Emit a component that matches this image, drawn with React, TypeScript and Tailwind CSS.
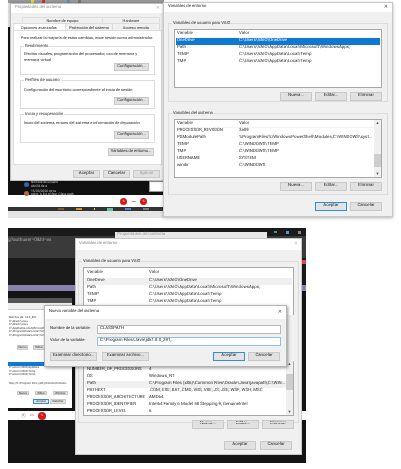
const font = "font-['Roboto',sans-serif] [text-rendering:geometricPrecision]";

function Btn({ children, className = "", primary = false, disabled = false }: { children: React.ReactNode; className?: string; primary?: boolean; disabled?: boolean }) {
  return (
    <div className={`flex items-center justify-center whitespace-nowrap text-[4.4px] leading-none border ${primary ? "border-[#2b8fd9] bg-[#e3e3e3] border-[1.5px]" : "border-[#c9c9c9] bg-[#e1e1e1]"} ${disabled ? "text-[#9a9a9a] bg-[#cfcfcf]" : "text-[#222]"} ${className}`}>
      {children}
    </div>
  );
}

function GroupBox({ label, className = "", labelBg = "bg-[#f0f0f0]", children }: { label: string; className?: string; labelBg?: string; children: React.ReactNode }) {
  return (
    <div className={`relative border border-[#dcdcdc] ${className}`}>
      <span className={`absolute left-[3px] top-[-4px] px-[1px] text-[4.2px] leading-[7px] whitespace-nowrap text-[#2a2a2a] ${labelBg}`}>{label}</span>
      {children}
    </div>
  );
}

function Row({ name, value, selected = false, hover = false }: { name: string; value: string; selected?: boolean; hover?: boolean }) {
  return (
    <div className={`flex h-[7px] items-center text-[4.4px] leading-none whitespace-nowrap ${selected ? "bg-[#0f78d0] text-white" : hover ? "bg-[#f0f0f0] text-[#2a2a2a]" : "text-[#2a2a2a]"}`}>
      <span className="w-[63px] shrink-0 pl-[1px]">{name}</span>
      <span>{value}</span>
    </div>
  );
}

function List({ className = "", rows, scroll = false, thumbClass = "" }: { className?: string; rows: { n: string; v: string; s?: boolean; h?: boolean }[]; scroll?: boolean; thumbClass?: string }) {
  return (
    <div className={`relative overflow-hidden border border-[#a8a8a8] bg-white px-[1px] pt-[1px] ${className}`}>
      <div className="flex h-[7px] items-center border-b border-[#f4f4f4] text-[4.4px] leading-none text-[#333]">
        <span className="w-[63px] shrink-0 pl-[1px]">Variable</span>
        <span>Valor</span>
      </div>
      <div className="flex flex-col">
        {rows.map((r) => (
          <Row key={r.n} name={r.n} value={r.v} selected={r.s} hover={r.h} />
        ))}
      </div>
      {scroll && (
        <div className="absolute right-0 top-0 flex h-full w-[7px] flex-col items-center bg-[#f0f0f0] text-[4px] leading-[6px] text-[#555]">
          <span>▲</span>
          <div className={`w-full bg-[#cdcdcd] ${thumbClass}`} />
          <span className="mt-auto">▼</span>
        </div>
      )}
    </div>
  );
}

function Triple() {
  return (
    <div className="flex justify-end gap-[3px]">
      <Btn className="h-[9px] w-[32px]">Nueva...</Btn>
      <Btn className="h-[9px] w-[32px]">Editar...</Btn>
      <Btn className="h-[9px] w-[32px]">Eliminar</Btn>
    </div>
  );
}

function TitleBar({ title, muted = false, className = "" }: { title: string; muted?: boolean; className?: string }) {
  return (
    <div className={`flex h-[9px] items-center justify-between bg-white text-[4.2px] leading-none ${muted ? "text-[#8a8a8a]" : "text-[#2a2a2a]"} ${className}`}>
      <span>{title}</span>
      <span className={`text-[5px] ${muted ? "text-[#bbb]" : "text-[#555]"}`}>✕</span>
    </div>
  );
}

function PerfBox({ label, text }: { label: string; text: React.ReactNode }) {
  return (
    <GroupBox label={label} labelBg="bg-white" className="flex h-[29px] flex-col bg-white px-[3px] pt-[4px]">
      <p className="text-[3.9px] leading-[6px] whitespace-nowrap text-[#2a2a2a]">{text}</p>
      <Btn className="mt-auto mb-[3px] ml-auto mr-[2px] h-[8px] w-[35px] !text-[4.1px]">Configuración...</Btn>
    </GroupBox>
  );
}

function DialogSistema() {
  return (
    <div className="absolute left-[10px] top-[3px] flex h-[178px] w-[155px] flex-col border border-[#bdbdbd] bg-[#f0f0f0] shadow-[0_0_3px_rgba(0,0,0,0.25)]">
      <TitleBar title="Propiedades del sistema" muted className="px-[4px]" />
      <div className="flex flex-1 flex-col bg-[#f0f0f0] px-[2px] pt-[4px]">
        <div className="flex h-[6px] text-[3.9px] leading-[6px] text-[#2a2a2a]">
          <span className="ml-[9px] w-[81px] border-x border-t border-[#ddd] text-center">Nombre de equipo</span>
          <span className="w-[57px] border-r border-t border-[#ddd] text-center">Hardware</span>
        </div>
        <div className="flex h-[7px] text-[3.9px] leading-[7px] text-[#2a2a2a]">
          <span className="w-[53px] border-x border-t border-[#ddd] bg-white pl-[7px] whitespace-nowrap">Opciones avanzadas</span>
          <span className="w-[47px] border-r border-t border-[#ddd] text-center whitespace-nowrap">Protección del sistema</span>
          <span className="w-[47px] border-r border-t border-[#ddd] text-center whitespace-nowrap">Acceso remoto</span>
        </div>
        <div className="flex h-[135px] w-[149px] flex-col border border-[#dcdcdc] bg-white px-[6px] pt-[4px]">
          <p className="ml-[1px] text-[3.9px] leading-[6px] whitespace-nowrap text-[#2a2a2a]">Para realizar la mayoría de estos cambios, inicie sesión como administrador.</p>
          <div className="mt-[5px] flex flex-col gap-[5px]">
            <PerfBox label="Rendimiento" text={<>Efectos visuales, programación del procesador, uso de memoria y<br />memoria virtual</>} />
            <PerfBox label="Perfiles de usuario" text={<span className="mt-[2px] block">Configuración del escritorio correspondiente al inicio de sesión</span>} />
            <PerfBox label="Inicio y recuperación" text={<span className="mt-[1px] block">Inicio del sistema, errores del sistema e información de depuración</span>} />
          </div>
          <Btn className="mt-[5px] ml-auto mr-[1px] h-[8px] w-[46px] !text-[4.1px]">Variables de entorno...</Btn>
        </div>
        <div className="mt-[5px] flex justify-end gap-[3px] pr-[2px]">
          <Btn className="h-[8px] w-[27px]">Aceptar</Btn>
          <Btn className="h-[8px] w-[27px]">Cancelar</Btn>
          <Btn disabled className="h-[8px] w-[27px]">Aplicar</Btn>
        </div>
      </div>
    </div>
  );
}

function DialogEntornoTop() {
  const user = [
    { n: "OneDrive", v: "C:\\Users\\VAIO\\OneDrive", s: true },
    { n: "Path", v: "C:\\Users\\VAIO\\AppData\\Local\\Microsoft\\WindowsApps;" },
    { n: "TEMP", v: "C:\\Users\\VAIO\\AppData\\Local\\Temp" },
    { n: "TMP", v: "C:\\Users\\VAIO\\AppData\\Local\\Temp" },
  ];
  const sys = [
    { n: "PROCESSOR_REVISION", v: "3a09" },
    { n: "PSModulePath", v: "%ProgramFiles%\\WindowsPowerShell\\Modules;C:\\WINDOWS\\syst..." },
    { n: "TEMP", v: "C:\\WINDOWS\\TEMP" },
    { n: "TMP", v: "C:\\WINDOWS\\TEMP" },
    { n: "USERNAME", v: "SYSTEM" },
    { n: "windir", v: "C:\\WINDOWS" },
  ];
  return (
    <div className="absolute left-[163px] top-[2px] flex h-[215px] w-[230px] flex-col border border-[#c8c8c8] bg-[#f0f0f0] shadow-[0_1px_3px_rgba(0,0,0,0.3)]">
      <TitleBar title="Variables de entorno" className="px-[4px]" />
      <div className="flex flex-1 flex-col px-[4px] pt-[11px]">
        <GroupBox label="Variables de usuario para VAIO" className="flex h-[79px] flex-col px-[5px] pt-[5px]">
          <List className="h-[59px]" rows={user} />
          <div className="mt-[4px]"><Triple /></div>
        </GroupBox>
        <GroupBox label="Variables del sistema" className="mt-[11px] flex h-[82px] flex-col px-[5px] pt-[5px]">
          <List className="h-[59px]" scroll thumbClass="mt-[28px] h-[13px]" rows={sys} />
          <div className="mt-[4px]"><Triple /></div>
        </GroupBox>
        <div className="mt-[7px] flex justify-end gap-[3px] pr-[6px]">
          <Btn primary className="h-[9px] w-[32px]">Aceptar</Btn>
          <Btn className="h-[9px] w-[32px]">Cancelar</Btn>
        </div>
      </div>
    </div>
  );
}

function TopScene() {
  return (
    <div className="absolute left-[8px] top-0 flex h-[221px] w-[156px] flex-col">
      <div className="flex h-[3px] items-center gap-[8px] bg-[#9a9a9a] pl-[23px]">
        <span className="h-[3px] w-[3px] bg-[#e5d23a]" />
        <span className="h-[3px] w-[3px] bg-[#c33]" />
        <span className="ml-[14px] h-[3px] w-[3px] bg-[#6a8fc0]" />
        <span className="h-[3px] w-[3px] bg-[#777]" />
      </div>
      <div className="h-[24px] bg-[#e8e8e8]" />
      <div className="h-[168px] bg-[#111]" />
      <div className="flex h-[12px] items-center justify-end gap-[4.5px] bg-white pr-[17px]">
        <span className="flex h-[7px] w-[7px] items-center justify-center rounded-full bg-[#d9181b] text-[3px] text-white">%</span>
        <span className="h-[1px] w-[4px] bg-[#e08a8a]" />
        <span className="flex h-[7px] w-[7px] items-center justify-center rounded-full bg-[#d9181b] text-[3px] text-white">%</span>
      </div>
      <div className="flex h-[4px] items-center gap-[12px] bg-[#333] pl-[50px]">
        <span className="h-[2px] w-[6px] bg-[#7a5a30]" />
        <span className="h-[2px] w-[6px] bg-[#c9962e]" />
        <span className="h-[2px] w-[1px] bg-[#e5d23a]" />
        <span className="h-[3px] w-[6px] bg-[#5fc0a8]" />
        <span className="h-[2px] w-[6px] bg-[#5a7fc0]" />
        <span className="h-[2px] w-[6px] bg-[#777]" />
      </div>
      <div className="h-[7px] bg-[#e4e4e4]" />
      <div className="absolute left-[141px] top-[181px] h-[11px] w-[15px] border border-[#999] bg-white" />
      <div className="absolute left-[16px] top-[181px] flex flex-col gap-[1.5px] text-[3.2px] leading-[3.5px] text-white">
        <div className="flex items-center gap-[2px]">
          <span className="h-[5px] w-[5px] rounded-full bg-[#3a5fa8]" />
          <div className="text-[#ccc]">Nombre de usuario<br />Abril 8 de a</div>
        </div>
        <div className="flex items-center gap-[2px]">
          <span className="h-[5px] w-[5px] rounded-full bg-[#a86a4a]" />
          <div className="text-[#ccc]">15/03/2020 otros<br />point. A list of Star. Class path.</div>
        </div>
      </div>
    </div>
  );
}

function SmallWindow() {
  const rows = ["Nalcoss jdk 1.8.0_291", "C:\\Oracle\\Java", "C:\\Oracle\\Java", "C:\\AppData\\Local\\Microsoft\\Windows", "C:\\Program\\Data\\Local\\Temp", "C:\\Program\\Data\\Local\\Temp"];
  return (
    <div className="absolute left-[8px] top-[298px] flex h-[110px] w-[64px] flex-col overflow-hidden bg-white text-[2.8px] leading-[3.5px] text-[#333]">
      <div className="h-[5px] bg-[#555]" />
      <div className="h-[7px] border-b border-[#ccc] bg-[#f0f0f0]" />
      <div className="flex flex-col px-[1px] pt-[6px]">
        {rows.map((r, i) => (<span key={i} className="whitespace-nowrap">{r}</span>))}
      </div>
      <div className="mt-[8px] flex gap-[5px] pl-[9px]">
        <Btn className="h-[5px] w-[11px] !text-[2.8px]">Nueva</Btn>
        <Btn className="h-[5px] w-[12px] !text-[2.8px]">Editar</Btn>
      </div>
      <div className="mt-[12px] h-[4px] w-[37px] bg-[#0f78d0]" />
      <div className="flex flex-col px-[1px]">
        <span>C:\Users\VAIO\AppData</span>
        <span>C:\Users\VAIO\Temp</span>
        <span>C:\Users\VAIO\Temp</span>
        <span className="mt-[5px] whitespace-nowrap">http://C:\Program Files (x86)\Common\Oracle</span>
      </div>
      <div className="mt-auto mb-[4px] flex flex-col gap-[4px] pl-[9px]">
        <div className="flex gap-[6px]">
          <Btn className="h-[4px] w-[12px] !text-[2.8px]">Nueva</Btn>
          <Btn className="h-[4px] w-[12px] !text-[2.8px]">Editar</Btn>
          <Btn className="h-[4px] w-[15px] !text-[2.8px]">Eliminar</Btn>
        </div>
        <div className="ml-[16px] flex gap-[1px]">
          <Btn primary className="h-[5px] w-[16px] !text-[2.8px]">Aceptar</Btn>
          <Btn className="h-[5px] w-[16px] !text-[2.8px]">Cancelar</Btn>
        </div>
      </div>
    </div>
  );
}

function BehindRow({ n, v, h }: { n: string; v: string; h?: boolean }) {
  return (
    <div className={`flex h-[7px] items-center text-[4.4px] leading-none whitespace-nowrap text-[#2a2a2a] ${h ? "bg-[#f0f0f0]" : ""}`}>
      <span className="w-[64px] shrink-0 pl-[2px]">{n}</span>
      <span>{v}</span>
    </div>
  );
}

function EntornoBehind() {
  const lowRows = [
    { n: "NUMBER_OF_PROCESSORS", v: "4" },
    { n: "OS", v: "Windows_NT" },
    { n: "Path", v: "C:\\Program Files (x86)\\Common Files\\Oracle\\Java\\javapath;C:\\WIN...", h: true },
    { n: "PATHEXT", v: ".COM;.EXE;.BAT;.CMD;.VBS;.VBE;.JS;.JSE;.WSF;.WSH;.MSC" },
    { n: "PROCESSOR_ARCHITECTURE", v: "AMD64" },
    { n: "PROCESSOR_IDENTIFIER", v: "Intel64 Family 6 Model 58 Stepping 9, GenuineIntel" },
    { n: "PROCESSOR_LEVEL", v: "6" },
  ];
  const highRows = [
    { n: "OneDrive", v: "C:\\Users\\VAIO\\OneDrive", h: true },
    { n: "Path", v: "C:\\Users\\VAIO\\AppData\\Local\\Microsoft\\WindowsApps;" },
    { n: "TEMP", v: "C:\\Users\\VAIO\\AppData\\Local\\Temp" },
    { n: "TMP", v: "C:\\Users\\VAIO\\AppData\\Local\\Temp" },
  ];
  return (
    <div className="absolute left-[75px] top-[238px] flex h-[217px] w-[227px] flex-col border border-[#c8c8c8] bg-[#f0f0f0]">
      <TitleBar title="Variables de entorno" muted className="h-[11px] px-[3px]" />
      <div className="flex flex-1 flex-col px-[2px] pt-[11px]">
        <GroupBox label="Variables de usuario para VAIO" className="h-[162px] w-[221px] px-[4px] pt-[5px]">
          <div className="relative h-[149px]">
            <div className="absolute inset-x-0 top-0 h-[48px] overflow-hidden border-x border-t border-[#a8a8a8] bg-white px-[1px]">
              <div className="flex h-[10px] items-center text-[4.4px] leading-none text-[#333]"><span className="w-[64px] pl-[2px]">Variable</span><span>Valor</span></div>
              {highRows.map((r) => <BehindRow key={r.n} n={r.n} v={r.v} h={r.h} />)}
            </div>
            <div className="absolute inset-x-0 bottom-0 h-[55px] overflow-hidden border-x border-b border-[#a8a8a8] bg-white px-[1px]">
              <div className="mt-[6px]">
                {lowRows.map((r) => <BehindRow key={r.n} n={r.n} v={r.v} h={r.h} />)}
              </div>
              <div className="absolute right-0 top-0 flex h-full w-[7px] flex-col items-center bg-[#f0f0f0] text-[4px] leading-[6px] text-[#555]">
                <span>▲</span>
                <div className="mt-[7px] h-[16px] w-full bg-[#cdcdcd]" />
                <span className="mt-auto">▼</span>
              </div>
            </div>
          </div>
        </GroupBox>
        <div className="mt-[-3px] pr-[5px]"><Triple /></div>
        <div className="mt-[12px] flex justify-end gap-[4px] pr-[7px]">
          <Btn className="h-[9px] w-[32px]">Aceptar</Btn>
          <Btn className="h-[9px] w-[32px]">Cancelar</Btn>
        </div>
      </div>
    </div>
  );
}

function NuevaDialog() {
  return (
    <div className="absolute left-[44px] top-[305px] flex h-[62px] w-[243px] flex-col border border-[#b5b5b5] bg-[#f0f0f0] shadow-[1px_1px_3px_rgba(0,0,0,0.4)]">
      <TitleBar title="Nueva variable del sistema" className="h-[13px] px-[4px]" />
      <div className="flex flex-1 flex-col px-[5px] pt-[6px]">
        <div className="flex h-[9px] items-center text-[4.1px] leading-none text-[#222]">
          <span className="w-[47px] shrink-0 whitespace-nowrap">Nombre de la variable:</span>
          <div className="flex h-full w-[185px] items-center border border-[#b9b9b9] bg-white pl-[2px] text-[4.4px]">CLASSPATH</div>
        </div>
        <div className="mt-[3px] flex h-[9px] items-center text-[4.1px] leading-none text-[#222]">
          <span className="w-[47px] shrink-0 whitespace-nowrap">Valor de la variable:</span>
          <div className="flex h-full w-[185px] items-center border border-[#8cc4ee] bg-white pl-[2px] text-[4.4px]">C:\Program Files\Java\jdk1.8.0_291;.</div>
        </div>
        <div className="mt-[6px] flex justify-between pr-[1px]">
          <div className="flex gap-[5px]">
            <Btn className="h-[9px] w-[47px]">Examinar directorio...</Btn>
            <Btn className="h-[9px] w-[47px]">Examinar archivo...</Btn>
          </div>
          <div className="flex gap-[3px]">
            <Btn primary className="h-[9px] w-[32px]">Aceptar</Btn>
            <Btn className="h-[9px] w-[32px]">Cancelar</Btn>
          </div>
        </div>
      </div>
    </div>
  );
}

function BottomScene() {
  return (
    <>
      <div className="absolute left-[8px] top-[228px] flex h-[235px] w-[298px] flex-col bg-[#141414]">
        <div className="flex h-[8px] items-center justify-end gap-[9px] bg-[#1b1b1b] pr-[5px]">
          <span className="h-[2px] w-[3px] bg-[#3aa55a]" />
          <span className="h-[3px] w-[3px] bg-[#5a8fd0]" />
          <span className="h-[3px] w-[3px] bg-[#888]" />
        </div>
        <div className="flex h-[22px] items-start bg-[#3a3a3a] pt-[2px] text-[4.8px] leading-[6px] text-[#aaa]">g?authuser=0&amp;hl=es</div>
        <div className="h-[27px] bg-[#1a1a1a]" />
        <div className="h-[6px] bg-[#8a82ad]" />
        <div className="h-[120px]" />
        <div className="flex h-[9px] items-center gap-[4px] bg-white pl-[13px] text-[3px] text-[#555]">
          <span className="flex h-[5px] w-[5px] items-center justify-center rounded-full border border-[#ddd]">S</span>
          <span className="text-[#d33]">2%</span>
          <span className="flex h-[8px] w-[8px] items-center justify-center rounded-full bg-[#d9181b] text-white">%</span>
        </div>
      </div>
      <div className="absolute left-[115px] top-[232px] flex h-[10px] w-[152px] items-start bg-[#e8e8e8] pl-[2px] text-[4.4px] leading-[6px] text-[#999]">Propiedades del sistema</div>
      <div className="absolute left-[302px] top-[260px] h-[4px] w-[4px] bg-[#d84a4a]" />
      <SmallWindow />
      <EntornoBehind />
      <NuevaDialog />
    </>
  );
}

export default function App() {
  return (
    <div className={`relative h-[469px] w-[401px] overflow-hidden bg-white blur-[0.35px] ${font}`}>
      <TopScene />
      <DialogSistema />
      <DialogEntornoTop />
      <BottomScene />
    </div>
  );
}
